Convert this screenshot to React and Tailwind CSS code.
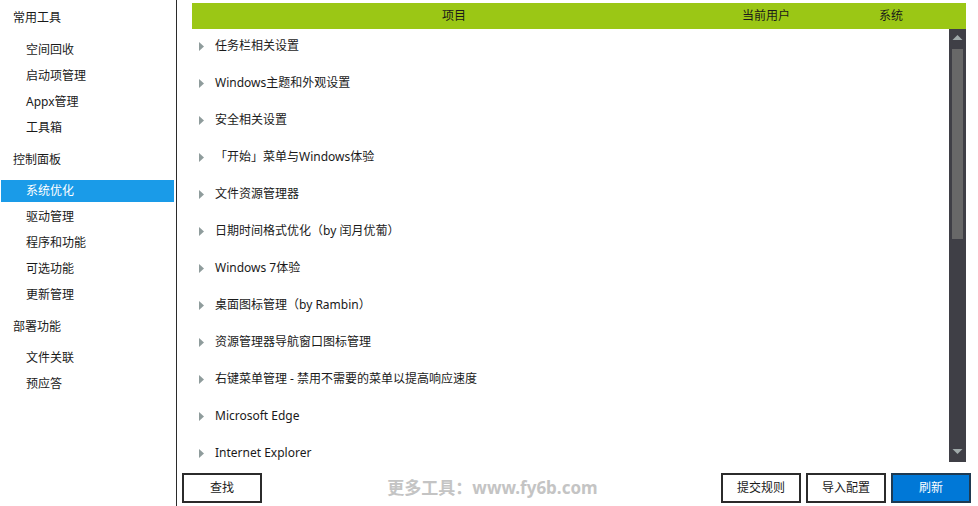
import React from "react";

const font = { fontFamily: '"Noto Sans", "Noto Sans CJK SC", sans-serif' };

const sidebar = [
  { t: "常用工具", h: true },
  { t: "空间回收" },
  { t: "启动项管理" },
  { t: "Appx管理" },
  { t: "工具箱" },
  { t: "控制面板", h: true },
  { t: "系统优化", sel: true },
  { t: "驱动管理" },
  { t: "程序和功能" },
  { t: "可选功能" },
  { t: "更新管理" },
  { t: "部署功能", h: true },
  { t: "文件关联" },
  { t: "预应答" },
];

const rows = [
  "任务栏相关设置",
  "Windows主题和外观设置",
  "安全相关设置",
  "「开始」菜单与Windows体验",
  "文件资源管理器",
  "日期时间格式优化（by 闰月优葡）",
  "Windows 7体验",
  "桌面图标管理（by Rambin）",
  "资源管理器导航窗口图标管理",
  "右键菜单管理 - 禁用不需要的菜单以提高响应速度",
  "Microsoft Edge",
  "Internet Explorer",
];

function Arrow() {
  return (
    <svg width="6" height="9" viewBox="0 0 6 9" className="shrink-0">
      <polygon points="0,0 5,4.5 0,9" fill="#8f9c9c" />
    </svg>
  );
}

export default function App() {
  return (
    <div
      className="w-[978px] h-[506px] bg-white flex text-[12px] text-[#1a1a1a] overflow-hidden"
      style={font}
    >
      <div className="w-[176px] shrink-0 pt-[6px]">
        {sidebar.map((s, i) => {
          if (s.h)
            return (
              <div
                key={i}
                className={`h-[24px] leading-[24px] pl-[13px] ${i === 0 ? "mb-[7px]" : "mt-[7px] mb-[6px]"}`}
              >
                {s.t}
              </div>
            );
          return (
            <div key={i} className="h-[26px] flex items-center">
              <div
                className={`w-[173px] ml-[1px] h-[22px] leading-[22px] pl-[25px] ${
                  s.sel ? "bg-[#1a9be8] text-white" : ""
                }`}
              >
                {s.t}
              </div>
            </div>
          );
        })}
      </div>
      <div className="w-[1px] shrink-0 bg-[#2b2b2b]" />
      <div className="flex-1 flex flex-col">
        <div className="pt-[3px] pl-[15px] pr-[12px]">
          <div className="h-[26px] bg-[#9bc715] flex items-center">
            <div className="w-[524px] text-center">项目</div>
            <div className="w-[100px] text-center">当前用户</div>
            <div className="flex-1 text-center">系统</div>
          </div>
          <div className="h-[433px] flex">
            <div className="flex-1 overflow-hidden">
              {rows.map((r, i) => (
                <div key={i} className="h-[37px] flex items-start">
                  <div className="h-[34px] flex items-center pl-[7px] gap-[10px]">
                    <Arrow />
                    <span>{r}</span>
                  </div>
                </div>
              ))}
            </div>
            <div className="w-[17px] bg-[#3f3f46] flex flex-col items-center">
              <svg width="17" height="20" viewBox="0 0 17 20">
                <polygon points="3.5,11 8.5,6 13.5,11" fill="#a0aaaa" />
              </svg>
              <div className="w-[11px] h-[190px] bg-[#686868]" />
              <div className="flex-1" />
              <svg width="17" height="16" viewBox="0 0 17 16">
                <polygon points="3.5,3 13.5,3 8.5,8" fill="#a0aaaa" />
              </svg>
            </div>
          </div>
        </div>
        <div className="flex items-center pl-[5px] pr-[7px] pt-[11px]">
          <button className="w-[80px] h-[30px] border-2 border-[#2b2b2b] bg-white">查找</button>
          <div className="flex-1 flex justify-center">
            <span className="text-[17px] font-bold text-[#c4c4c4] ml-[2px]">
              更多工具：www.fy6b.com
            </span>
          </div>
          <button className="w-[80px] h-[30px] border-2 border-[#2b2b2b] bg-white mr-[5px]">
            提交规则
          </button>
          <button className="w-[80px] h-[30px] border-2 border-[#2b2b2b] bg-white mr-[5px]">
            导入配置
          </button>
          <button className="w-[80px] h-[30px] border-2 border-[#1e3a52] bg-[#0078d7] text-white">
            刷新
          </button>
        </div>
      </div>
    </div>
  );
}
